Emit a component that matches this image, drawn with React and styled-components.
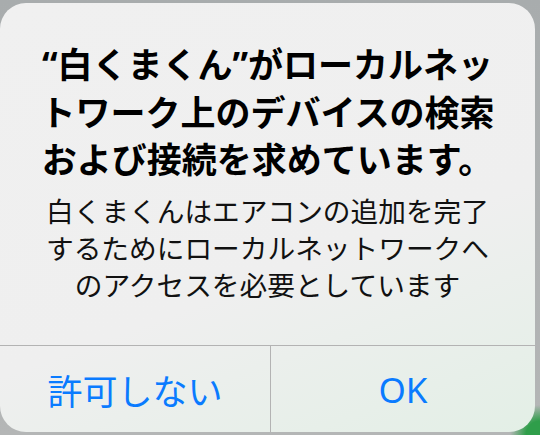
import React from "react";
import styled, { createGlobalStyle } from "styled-components";

const GlobalStyle = createGlobalStyle`
  html, body {
    margin: 0;
    padding: 0;
  }
  body {
    font-family: "Noto Sans", "Noto Sans CJK JP", sans-serif;
  }
`;

const Backdrop = styled.div`
  width: 540px;
  height: 435px;
  box-sizing: border-box;
  padding: 3px 5px 3px 0;
  overflow: hidden;
  background:
    radial-gradient(circle at 100% 100%, #2f9e4a 0, #2f9e4a 14px, transparent 30px),
    linear-gradient(180deg, #a8acad 0%, #b4b6b6 100%);
`;

const Alert = styled.div`
  height: 100%;
  border-radius: 26px;
  overflow: hidden;
  display: flex;
  flex-direction: column;
  background: linear-gradient(160deg, #f0f0f0 0%, #efefef 60%, #e3efe6 100%);
`;

const Content = styled.div`
  flex: 1;
  display: flex;
  flex-direction: column;
  align-items: center;
  padding: 38px 20px 0;
  text-align: center;
`;

const Title = styled.div`
  font-size: 35px;
  font-weight: 700;
  line-height: 47.5px;
  color: #000;
  white-space: nowrap;
`;

const Message = styled.div`
  margin-top: 9px;
  font-size: 27.7px;
  font-weight: 400;
  line-height: 37px;
  color: #111;
  white-space: nowrap;
`;

const Actions = styled.div`
  height: 86px;
  display: grid;
  grid-template-columns: 270px 1fr;
  border-top: 1px solid #b3b3b3;
`;

const Action = styled.button`
  appearance: none;
  border: none;
  background: transparent;
  margin: 0;
  padding: 0;
  font-family: inherit;
  font-size: 35px;
  font-weight: 400;
  color: #0a7bff;
  border-left: ${(p) => (p.$divided ? "1px solid #b3b3b3" : "none")};
  cursor: pointer;
`;

const App = () => {
  return (
    <>
      <GlobalStyle />
      <Backdrop>
        <Alert>
          <Content>
            <Title>
              “白くまくん”がローカルネッ
              <br />
              トワーク上のデバイスの検索
              <br />
              および接続を求めています。
            </Title>
            <Message>
              白くまくんはエアコンの追加を完了
              <br />
              するためにローカルネットワークへ
              <br />
              のアクセスを必要としています
            </Message>
          </Content>
          <Actions>
            <Action>許可しない</Action>
            <Action $divided>OK</Action>
          </Actions>
        </Alert>
      </Backdrop>
    </>
  );
};

export default App;
